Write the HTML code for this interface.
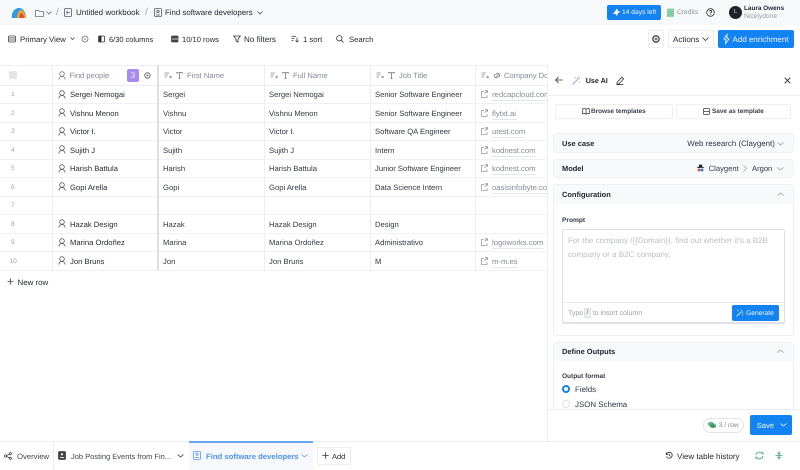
<!DOCTYPE html>
<html><head><meta charset="utf-8">
<style>
html,body{margin:0;padding:0;width:800px;height:470px;overflow:hidden;background:#fff}
body{font-family:"Liberation Sans",sans-serif;font-size:7.65px;color:#3f4450;position:relative;text-rendering:geometricPrecision;filter:blur(.25px)}
.t{position:absolute;white-space:nowrap;line-height:12px;height:12px;margin-top:.7px}
.b{position:absolute;box-sizing:border-box}
.d{color:#262a34}
.g{color:#858a95}
.h{color:#858a95;font-size:7.6px}
.m{color:#343844}
.u{color:#858a95;font-size:7.7px;border-bottom:1px solid #e4e6ea;height:11px}
.n{color:#a0a4ad;font-size:6.6px}
.s{color:#22252e;font-weight:bold;font-size:7.45px}
svg{position:absolute;overflow:visible;fill:none;stroke:#4a4f5a;stroke-width:.8}
</style></head><body>

<!-- top bar -->
<div class="b" style="left:0;top:0;width:800px;height:25px;background:#f7f8fa"></div>
<svg style="left:11px;top:7px" width="16" height="12" viewBox="0 0 16 12"><path d="M1 11C0 5 4 1 8 1c4 0 7 4 7 10z" fill="#2c9be8" stroke="none"/><path d="M6 11c0-5 2-8 4-8s4 3 5 8z" fill="#f2a32b" stroke="none"/><path d="M8.500 11c0-3 1-5 2-5s2 2 2.500 5z" fill="#e4483b" stroke="none"/></svg>
<svg style="left:35px;top:9px" width="9" height="8" viewBox="0 0 9 8"><path d="M.5 1.500h3l1 1h4v5h-8z" stroke="#6b707b"/></svg>
<svg style="left:46px;top:11px" width="6" height="4" viewBox="0 0 6 4"><path d="M.5.500l2.500 2.500L5.500.500" stroke="#6b707b"/></svg>
<div class="t g" style="left:56px;top:6px;font-size:10px;color:#a0a4ad">/</div>
<svg style="left:64px;top:8px" width="8" height="9" viewBox="0 0 8 9"><rect x=".5" y=".5" width="7" height="8" rx="1" stroke="#555a66"/><path d="M3 2.500v4M3 4.500h3" stroke="#555a66"/></svg>
<div class="t d" style="left:76px;top:6px;font-size:8px">Untitled workbook</div>
<div class="t g" style="left:145px;top:6px;font-size:10px;color:#a0a4ad">/</div>
<svg style="left:154px;top:8px" width="8" height="9" viewBox="0 0 8 9"><rect x=".5" y=".5" width="7" height="8" rx="1" stroke="#555a66"/><circle cx="4" cy="3.500" r="1.200" stroke="#555a66"/><path d="M2 7h4" stroke="#555a66"/></svg>
<div class="t d" style="left:165px;top:6px;font-size:7.85px">Find software developers</div>
<svg style="left:257px;top:11px" width="6" height="4" viewBox="0 0 6 4"><path d="M.5.500l2.500 2.500L5.500.500"/></svg>

<div class="b" style="left:607px;top:5px;width:54px;height:15px;background:#1383f2;border-radius:2px"></div>
<svg style="left:612px;top:8px" width="9" height="9" viewBox="0 0 9 9"><path d="M5 .5l1 2.500 2.500 1-2.500 1-1 3-1.500-2L1 6l1.500-2z" fill="#fff" stroke="none"/></svg>
<div class="t" style="left:622px;top:6px;color:#eef6ff;font-size:6.7px">14 days left</div>
<svg style="left:667px;top:8px" width="7" height="9" viewBox="0 0 7 9"><path d="M.5 1h6v7.500h-6z" fill="#86c9a4" stroke="#86c9a4"/></svg>
<div class="t g" style="left:677px;top:6px;color:#8f949e;font-size:6.7px">Credits</div>
<svg style="left:706px;top:8px" width="9" height="9" viewBox="0 0 9 9"><circle cx="4.500" cy="4.500" r="3.800" stroke="#333"/><path d="M3.300 3.500c.2-1.400 2.400-1.300 2.400 0 0 1-1.200 1-1.200 2M4.500 6.500v.6" stroke="#333" stroke-width=".9"/></svg>
<div class="b" style="left:729px;top:6px;width:13px;height:13px;border-radius:50%;background:#1f2228;color:#ccc;font-size:6px;text-align:center;line-height:13px">L</div>
<div class="t" style="left:744px;top:2.500px;color:#262a34;font-weight:bold;font-size:6.4px">Laura Owens</div>
<div class="t" style="left:744px;top:10.500px;color:#9a9ea7;font-size:6.7px">Nicelydone</div>

<!-- toolbar -->
<svg style="left:8px;top:35px" width="8" height="8" viewBox="0 0 8 8"><rect x=".5" y="1" width="7" height="6" rx=".8" stroke="#444"/><path d="M1 3h6M1 5h6" stroke="#444"/></svg>
<div class="t d" style="left:20px;top:33px;font-size:7.8px">Primary View</div>
<svg style="left:70px;top:37px" width="5" height="4" viewBox="0 0 5 4"><path d="M.5.500l2 2 2-2"/></svg>
<svg style="left:81px;top:35px" width="8" height="8" viewBox="0 0 8 8"><circle cx="4" cy="4" r="3" stroke="#666"/><circle cx="4" cy="4" r=".8" fill="#666" stroke="none"/></svg>
<svg style="left:98px;top:35px" width="8" height="8" viewBox="0 0 8 8"><rect x=".5" y="1" width="6" height="6" rx=".8" stroke="#333"/><rect x="1" y="1" width="2.500" height="6" fill="#333" stroke="none"/></svg>
<div class="t d" style="left:109px;top:33px;font-size:7.45px">6/30 columns</div>
<svg style="left:171px;top:35px" width="8" height="8" viewBox="0 0 8 8"><rect x=".5" y="1" width="6.500" height="6" rx=".8" fill="#444" stroke="#444"/><path d="M1 4h6" stroke="#fff" stroke-width=".7"/></svg>
<div class="t d" style="left:182px;top:33px;font-size:7.55px">10/10 rows</div>
<svg style="left:233px;top:35px" width="8" height="8" viewBox="0 0 8 8"><path d="M.7 1h6.600L5 4v3.200L3 6V4z" stroke="#333"/></svg>
<div class="t d" style="left:244px;top:33px;font-size:8.1px">No filters</div>
<svg style="left:291px;top:35px" width="8" height="8" viewBox="0 0 8 8"><path d="M.5 1.500h4.500M.5 3.500h3M.5 5.500h2M6 2.500v4.500M4.500 5.500L6 7l1.500-1.500" stroke="#444"/></svg>
<div class="t d" style="left:303px;top:33px;font-size:7.7px">1 sort</div>
<svg style="left:336px;top:35px" width="8" height="8" viewBox="0 0 8 8"><circle cx="3.300" cy="3.300" r="2.700" stroke="#333"/><path d="M5.300 5.300L7.500 7.500" stroke="#333"/></svg>
<div class="t d" style="left:349px;top:33px;font-size:7.7px">Search</div>

<div class="b" style="left:648px;top:30px;width:16px;height:18px;border:1px solid #eceef1;border-radius:2px"></div>
<svg style="left:652px;top:35px" width="8" height="8" viewBox="0 0 8 8"><circle cx="4" cy="4" r="3.200" stroke="#444" stroke-width="1.300"/><circle cx="4" cy="4" r="1" stroke="#444"/></svg>
<div class="b" style="left:668px;top:30px;width:46px;height:18px;border:1px solid #eceef1;border-radius:2px"></div>
<div class="t d" style="left:673px;top:33px;font-size:8px">Actions</div>
<svg style="left:702px;top:37px" width="7" height="4" viewBox="0 0 7 4"><path d="M.5.500l3 3 3-3" stroke="#333"/></svg>
<div class="b" style="left:718px;top:30px;width:76px;height:18px;background:#1383f2;border-radius:2px"></div>
<svg style="left:723px;top:34px" width="7" height="10" viewBox="0 0 7 10"><path d="M4 .5L1 5l2 .5-.5 4L6 5 4 4.500z" stroke="#fff"/></svg>
<div class="t" style="left:732.500px;top:33px;color:#eef6ff;font-size:8px">Add enrichment</div>

<!-- grid -->
<div class="b" style="left:0;top:65px;width:547px;height:1px;background:#eceef1"></div>
<div class="b" style="left:0;top:85px;width:547px;height:1px;background:#eceef1"></div>
<div class="b" style="left:0;top:103px;width:547px;height:1px;background:#f0f1f4"></div>
<div class="b" style="left:0;top:122px;width:547px;height:1px;background:#f0f1f4"></div>
<div class="b" style="left:0;top:140px;width:547px;height:1px;background:#f0f1f4"></div>
<div class="b" style="left:0;top:159px;width:547px;height:1px;background:#f0f1f4"></div>
<div class="b" style="left:0;top:177px;width:547px;height:1px;background:#f0f1f4"></div>
<div class="b" style="left:0;top:196px;width:547px;height:1px;background:#f0f1f4"></div>
<div class="b" style="left:0;top:214px;width:547px;height:1px;background:#f0f1f4"></div>
<div class="b" style="left:0;top:233px;width:547px;height:1px;background:#f0f1f4"></div>
<div class="b" style="left:0;top:251px;width:547px;height:1px;background:#f0f1f4"></div>
<div class="b" style="left:0;top:270px;width:547px;height:1px;background:#f0f1f4"></div>
<div class="b" style="left:52px;top:65px;width:1px;height:205px;background:#eceef1"></div>
<div class="b" style="left:157px;top:65px;width:2px;height:205px;background:#dcdee6"></div>
<div class="b" style="left:264px;top:65px;width:1px;height:205px;background:#eceef1"></div>
<div class="b" style="left:370px;top:65px;width:1px;height:205px;background:#eceef1"></div>
<div class="b" style="left:475px;top:65px;width:1px;height:205px;background:#eceef1"></div>

<!-- header -->
<div class="b" style="left:9px;top:71px;width:8px;height:8px;border-radius:1.500px;background:#e3e5ea"></div>
<svg style="left:58px;top:71px" width="8" height="9" viewBox="0 0 8 9"><circle cx="4" cy="3" r="2.300" stroke="#777"/><path d="M.8 8.500c.4-2 1.500-3 3.200-3s2.800 1 3.200 3" stroke="#777"/></svg>
<div class="t h" style="left:69.500px;top:69px">Find people</div>
<div class="b" style="left:127px;top:69px;width:12px;height:13px;background:#a78bef;border-radius:2px;color:#efe9ff;font-size:8.5px;line-height:13px;text-align:center">3</div>
<svg style="left:144px;top:72px" width="7" height="7" viewBox="0 0 7 7"><circle cx="3.500" cy="3.500" r="2.700" stroke="#555"/><circle cx="3.500" cy="3.500" r=".9" fill="#555" stroke="none"/></svg>

<svg style="left:164px;top:72px" width="8" height="7" viewBox="0 0 8 7"><path d="M.5 1h4.500M.5 3h3.500M.5 5h2.500M5 5h2.500M6.300 3.800L7.500 5 6.300 6.200" stroke="#8a8f9a"/></svg>
<svg style="left:176px;top:72px" width="7" height="7" viewBox="0 0 7 7"><path d="M.5 1.500V.7h6v.8M3.500.7v5.800M2.500 6.500h2" stroke="#777"/></svg>
<div class="t h" style="left:187px;top:69px">First Name</div>
<svg style="left:270px;top:72px" width="8" height="7" viewBox="0 0 8 7"><path d="M.5 1h4.500M.5 3h3.500M.5 5h2.500M5 5h2.500M6.300 3.800L7.500 5 6.300 6.200" stroke="#8a8f9a"/></svg>
<svg style="left:282px;top:72px" width="7" height="7" viewBox="0 0 7 7"><path d="M.5 1.500V.7h6v.8M3.500.7v5.800M2.500 6.500h2" stroke="#777"/></svg>
<div class="t h" style="left:293px;top:69px">Full Name</div>
<svg style="left:376px;top:72px" width="8" height="7" viewBox="0 0 8 7"><path d="M.5 1h4.500M.5 3h3.500M.5 5h2.500M5 5h2.500M6.300 3.800L7.500 5 6.300 6.200" stroke="#8a8f9a"/></svg>
<svg style="left:388px;top:72px" width="7" height="7" viewBox="0 0 7 7"><path d="M.5 1.500V.7h6v.8M3.500.7v5.800M2.500 6.500h2" stroke="#777"/></svg>
<div class="t h" style="left:399px;top:69px">Job Title</div>
<svg style="left:481px;top:72px" width="8" height="7" viewBox="0 0 8 7"><path d="M.5 1h4.500M.5 3h3.500M.5 5h2.500M5 5h2.500M6.300 3.800L7.500 5 6.300 6.200" stroke="#8a8f9a"/></svg>
<svg style="left:493px;top:72px" width="8" height="7" viewBox="0 0 8 7"><path d="M3.500 4.500l2-2M3 2.500l1-1c1-1 3.500 1 2.500 2.500l-1 1M5 4.500l-1 1c-1 1-3.500-1-2.500-2.500l1-1" stroke="#777"/></svg>
<div class="t h" style="left:504px;top:69px">Company Do</div>

<!-- row numbers -->
<div class="t n" style="left:11px;top:88.500px">1</div>
<div class="t n" style="left:11px;top:107px">2</div>
<div class="t n" style="left:11px;top:125.500px">3</div>
<div class="t n" style="left:11px;top:144px">4</div>
<div class="t n" style="left:11px;top:162.500px">5</div>
<div class="t n" style="left:11px;top:181px">6</div>
<div class="t n" style="left:11px;top:199.500px">7</div>
<div class="t n" style="left:11px;top:218px">8</div>
<div class="t n" style="left:11px;top:236.500px">9</div>
<div class="t n" style="left:9.500px;top:255px">10</div>

<!-- person icons -->
<svg style="left:58px;top:90px" width="8" height="9" viewBox="0 0 8 9"><circle cx="4" cy="3" r="2.300" stroke="#555"/><path d="M.8 8.500c.4-2 1.500-3 3.200-3s2.800 1 3.200 3" stroke="#555"/></svg>
<svg style="left:58px;top:108px" width="8" height="9" viewBox="0 0 8 9"><circle cx="4" cy="3" r="2.300" stroke="#555"/><path d="M.8 8.500c.4-2 1.500-3 3.200-3s2.800 1 3.200 3" stroke="#555"/></svg>
<svg style="left:58px;top:127px" width="8" height="9" viewBox="0 0 8 9"><circle cx="4" cy="3" r="2.300" stroke="#555"/><path d="M.8 8.500c.4-2 1.500-3 3.200-3s2.800 1 3.200 3" stroke="#555"/></svg>
<svg style="left:58px;top:145px" width="8" height="9" viewBox="0 0 8 9"><circle cx="4" cy="3" r="2.300" stroke="#555"/><path d="M.8 8.500c.4-2 1.500-3 3.200-3s2.800 1 3.200 3" stroke="#555"/></svg>
<svg style="left:58px;top:164px" width="8" height="9" viewBox="0 0 8 9"><circle cx="4" cy="3" r="2.300" stroke="#555"/><path d="M.8 8.500c.4-2 1.500-3 3.200-3s2.800 1 3.200 3" stroke="#555"/></svg>
<svg style="left:58px;top:182px" width="8" height="9" viewBox="0 0 8 9"><circle cx="4" cy="3" r="2.300" stroke="#555"/><path d="M.8 8.500c.4-2 1.500-3 3.200-3s2.800 1 3.200 3" stroke="#555"/></svg>
<svg style="left:58px;top:219px" width="8" height="9" viewBox="0 0 8 9"><circle cx="4" cy="3" r="2.300" stroke="#555"/><path d="M.8 8.500c.4-2 1.500-3 3.200-3s2.800 1 3.200 3" stroke="#555"/></svg>
<svg style="left:58px;top:238px" width="8" height="9" viewBox="0 0 8 9"><circle cx="4" cy="3" r="2.300" stroke="#555"/><path d="M.8 8.500c.4-2 1.500-3 3.200-3s2.800 1 3.200 3" stroke="#555"/></svg>
<svg style="left:58px;top:256px" width="8" height="9" viewBox="0 0 8 9"><circle cx="4" cy="3" r="2.300" stroke="#555"/><path d="M.8 8.500c.4-2 1.500-3 3.200-3s2.800 1 3.200 3" stroke="#555"/></svg>

<!-- names -->
<div class="t d" style="left:70px;top:88.500px">Sergei Nemogai</div>
<div class="t d" style="left:70px;top:107px">Vishnu Menon</div>
<div class="t d" style="left:70px;top:125.500px">Victor I.</div>
<div class="t d" style="left:70px;top:144px">Sujith J</div>
<div class="t d" style="left:70px;top:162.500px">Harish Battula</div>
<div class="t d" style="left:70px;top:181px">Gopi Arella</div>
<div class="t d" style="left:70px;top:218px">Hazak Design</div>
<div class="t d" style="left:70px;top:236.500px">Marina Ordoñez</div>
<div class="t d" style="left:70px;top:255px">Jon Bruns</div>

<div class="t m" style="left:163px;top:88.500px">Sergei</div>
<div class="t m" style="left:163px;top:107px">Vishnu</div>
<div class="t m" style="left:163px;top:125.500px">Victor</div>
<div class="t m" style="left:163px;top:144px">Sujith</div>
<div class="t m" style="left:163px;top:162.500px">Harish</div>
<div class="t m" style="left:163px;top:181px">Gopi</div>
<div class="t m" style="left:163px;top:218px">Hazak</div>
<div class="t m" style="left:163px;top:236.500px">Marina</div>
<div class="t m" style="left:163px;top:255px">Jon</div>

<div class="t m" style="left:269px;top:88.500px">Sergei Nemogai</div>
<div class="t m" style="left:269px;top:107px">Vishnu Menon</div>
<div class="t m" style="left:269px;top:125.500px">Victor I.</div>
<div class="t m" style="left:269px;top:144px">Sujith J</div>
<div class="t m" style="left:269px;top:162.500px">Harish Battula</div>
<div class="t m" style="left:269px;top:181px">Gopi Arella</div>
<div class="t m" style="left:269px;top:218px">Hazak Design</div>
<div class="t m" style="left:269px;top:236.500px">Marina Ordoñez</div>
<div class="t m" style="left:269px;top:255px">Jon Bruns</div>

<div class="t m" style="left:375px;top:88.500px">Senior Software Engineer</div>
<div class="t m" style="left:375px;top:107px">Senior Software Engineer</div>
<div class="t m" style="left:375px;top:125.500px">Software QA Engineer</div>
<div class="t m" style="left:375px;top:144px">Intern</div>
<div class="t m" style="left:375px;top:162.500px">Junior Software Engineer</div>
<div class="t m" style="left:375px;top:181px">Data Science Intern</div>
<div class="t m" style="left:375px;top:218px">Design</div>
<div class="t m" style="left:375px;top:236.500px">Administrativo</div>
<div class="t m" style="left:375px;top:255px">M</div>

<!-- link icons -->
<svg style="left:481px;top:90px" width="7" height="8" viewBox="0 0 7 8"><path d="M3 1.500H.5v6h5.500V5M4 .7h2.500v2.300M6.500.7L3.500 3.700" stroke="#999"/></svg>
<svg style="left:481px;top:109px" width="7" height="8" viewBox="0 0 7 8"><path d="M3 1.500H.5v6h5.500V5M4 .7h2.500v2.300M6.500.7L3.500 3.700" stroke="#999"/></svg>
<svg style="left:481px;top:127px" width="7" height="8" viewBox="0 0 7 8"><path d="M3 1.500H.5v6h5.500V5M4 .7h2.500v2.300M6.500.7L3.500 3.700" stroke="#999"/></svg>
<svg style="left:481px;top:146px" width="7" height="8" viewBox="0 0 7 8"><path d="M3 1.500H.5v6h5.500V5M4 .7h2.500v2.300M6.500.7L3.500 3.700" stroke="#999"/></svg>
<svg style="left:481px;top:164px" width="7" height="8" viewBox="0 0 7 8"><path d="M3 1.500H.5v6h5.500V5M4 .7h2.500v2.300M6.500.7L3.500 3.700" stroke="#999"/></svg>
<svg style="left:481px;top:183px" width="7" height="8" viewBox="0 0 7 8"><path d="M3 1.500H.5v6h5.500V5M4 .7h2.500v2.300M6.500.7L3.500 3.700" stroke="#999"/></svg>
<svg style="left:481px;top:238px" width="7" height="8" viewBox="0 0 7 8"><path d="M3 1.500H.5v6h5.500V5M4 .7h2.500v2.300M6.500.7L3.500 3.700" stroke="#999"/></svg>
<svg style="left:481px;top:257px" width="7" height="8" viewBox="0 0 7 8"><path d="M3 1.500H.5v6h5.500V5M4 .7h2.500v2.300M6.500.7L3.500 3.700" stroke="#999"/></svg>

<div class="t u" style="left:492px;top:88.500px">redcapcloud.com</div>
<div class="t u" style="left:492px;top:107px">flytxt.ai</div>
<div class="t u" style="left:492px;top:125.500px">utest.com</div>
<div class="t u" style="left:492px;top:144px">kodnest.com</div>
<div class="t u" style="left:492px;top:162.500px">kodnest.com</div>
<div class="t u" style="left:492px;top:181px">oasisinfobyte.com</div>
<div class="t u" style="left:492px;top:236.500px">logoworks.com</div>
<div class="t u" style="left:492px;top:255px">m-m.es</div>

<svg style="left:7px;top:278px" width="7" height="7" viewBox="0 0 7 7"><path d="M3.500.5v6M.5 3.500h6" stroke="#444"/></svg>
<div class="t d" style="left:17.500px;top:276px;font-size:7.9px">New row</div>

<!-- right panel -->
<div class="b" style="left:547px;top:65px;width:253px;height:376px;background:#fff;border-left:1px solid #eceef1"></div>
<div class="b" style="left:547px;top:95px;width:253px;height:1px;background:#eceef1"></div>
<svg style="left:555px;top:76px" width="8" height="8" viewBox="0 0 8 8"><path d="M7.500 4H.7M3.500 1.200L.7 4l2.800 2.800" stroke="#333"/></svg>
<svg style="left:572px;top:76px" width="9" height="9" viewBox="0 0 9 9"><path d="M.7 8.300L6 3M6 .7v1.500M7.800 2.500H6.500M3 .9v1.300M7 5.500v1.300" stroke="#a077ea"/></svg>
<div class="t" style="left:585.700px;top:74px;color:#22252e;font-weight:bold;font-size:7.2px">Use AI</div>
<svg style="left:616px;top:76px" width="9" height="9" viewBox="0 0 9 9"><path d="M1 6.500L5.800 1.200l1.800 1.600L3 8H1zM.5 8.600h7" stroke="#333"/></svg>
<svg style="left:784px;top:77px" width="7" height="7" viewBox="0 0 7 7"><path d="M.7.700l5.600 5.600M6.300.700L.7 6.300" stroke="#333" stroke-width="1"/></svg>

<div class="b" style="left:555px;top:104px;width:118px;height:15px;border:1px solid #eceef1;border-radius:2px"></div>
<svg style="left:582px;top:108px" width="8" height="7" viewBox="0 0 8 7"><path d="M4 1.200C3 .5 1.500.5.700.8v5c.800-.3 2.300-.3 3.300.4 1-.7 2.500-.7 3.300-.4v-5C6.500.5 5 .5 4 1.200zM4 1.200v5" stroke="#444"/></svg>
<div class="t" style="left:591px;top:105px;color:#3a3f4a;font-size:6.4px;font-weight:bold">Browse templates</div>
<div class="b" style="left:676px;top:104px;width:115px;height:15px;border:1px solid #eceef1;border-radius:2px"></div>
<svg style="left:703px;top:108px" width="7" height="7" viewBox="0 0 7 7"><rect x=".5" y=".5" width="6" height="6" rx="1" stroke="#444"/><path d="M1 3.500h5" stroke="#444"/></svg>
<div class="t" style="left:712px;top:105px;color:#3a3f4a;font-size:6.4px;font-weight:bold">Save as template</div>

<div class="b" style="left:553px;top:133px;width:241px;height:20px;background:#f8f9fb;border:1px solid #eff0f3;border-radius:4px"></div>
<div class="t s" style="left:562px;top:137px">Use case</div>
<div class="t m" style="left:687.300px;top:137px;font-size:7.9px">Web research (Claygent)</div>
<svg style="left:777px;top:142px" width="7" height="4" viewBox="0 0 7 4"><path d="M.5.500l3 2.500 3-2.500" stroke="#999"/></svg>

<div class="b" style="left:553px;top:159px;width:241px;height:19px;background:#f8f9fb;border:1px solid #eff0f3;border-radius:4px"></div>
<div class="t s" style="left:562px;top:162px">Model</div>
<svg style="left:696px;top:164px" width="9" height="9" viewBox="0 0 9 9"><path d="M1 3.500h7M2.800 3.500L3.500 1h2l.7 2.500" stroke="#222" fill="#222"/><circle cx="3" cy="6" r="1.500" fill="#e8543f" stroke="none"/><circle cx="6" cy="6" r="1.500" fill="#2f7fe0" stroke="none"/></svg>
<div class="t m" style="left:708.700px;top:162px;font-size:7.6px">Claygent</div>
<svg style="left:743px;top:165px" width="4" height="7" viewBox="0 0 4 7"><path d="M.5.500l3 3-3 3" stroke="#aaa"/></svg>
<div class="t m" style="left:752px;top:162px;font-size:7.6px">Argon</div>
<svg style="left:777px;top:167px" width="7" height="4" viewBox="0 0 7 4"><path d="M.5.500l3 2.500 3-2.500" stroke="#999"/></svg>

<div class="b" style="left:553px;top:184px;width:241px;height:152px;background:#fff;border:1px solid #eff0f3;border-radius:4px"></div>
<div class="b" style="left:554px;top:185px;width:239px;height:19px;background:#f8f9fb;border-radius:4px 4px 0 0"></div>
<div class="t s" style="left:562px;top:188px">Configuration</div>
<svg style="left:777px;top:192px" width="7" height="4" viewBox="0 0 7 4"><path d="M.5 3.500l3-2.500 3 2.500" stroke="#999"/></svg>
<div class="t" style="left:562px;top:214px;color:#333844;font-weight:bold;font-size:6.6px">Prompt</div>

<div class="b" style="left:562px;top:229px;width:223px;height:95px;border:1px solid #dfe1e6;border-bottom-width:2px;border-radius:2px"></div>
<div class="t" style="left:568px;top:234px;color:#bcc0c6;font-size:8px">For the company /{{Domain}}, find out whether it's a B2B</div>
<div class="t" style="left:568px;top:248px;color:#bcc0c6;font-size:8px">company or a B2C company.</div>
<div class="b" style="left:563px;top:302px;width:221px;height:1px;background:#e6e8ec"></div>
<div class="t" style="left:568px;top:307px;color:#9a9ea7;font-size:7px">Type</div>
<div class="b" style="left:584px;top:308px;width:7px;height:10px;background:#eef0f2;border:1px solid #e0e2e6;border-radius:1px;color:#777;font-size:7px;line-height:8px;text-align:center">/</div>
<div class="t" style="left:592.700px;top:307px;color:#9a9ea7;font-size:7px">to insert column</div>
<div class="b" style="left:732px;top:305px;width:47px;height:16px;background:#1383f2;border-radius:2px"></div>
<svg style="left:736px;top:309px" width="8" height="8" viewBox="0 0 8 8"><path d="M.7 7.300L5.500 2.500M1.500 1l1 1M6 5l1 1M5 .7l.5 1M7.300 3l-1 .3" stroke="#fff"/></svg>
<div class="t" style="left:746px;top:307px;color:#eef6ff;font-size:6.7px">Generate</div>

<div class="b" style="left:553px;top:342px;width:241px;height:70px;background:#fff;border:1px solid #eff0f3;border-radius:4px"></div>
<div class="b" style="left:554px;top:343px;width:239px;height:18px;background:#f8f9fb;border-radius:4px 4px 0 0"></div>
<div class="t s" style="left:562px;top:345px">Define Outputs</div>
<svg style="left:777px;top:349px" width="7" height="4" viewBox="0 0 7 4"><path d="M.5 3.500l3-2.500 3 2.500" stroke="#999"/></svg>
<div class="t" style="left:562px;top:370px;color:#333844;font-weight:bold;font-size:6.5px">Output format</div>
<div class="b" style="left:562px;top:385px;width:8px;height:8px;border-radius:50%;border:2.500px solid #1383f2;background:#fff"></div>
<div class="t m" style="left:575px;top:383px;font-size:7.9px">Fields</div>
<div class="b" style="left:562px;top:400px;width:8px;height:8px;border-radius:50%;border:1px solid #dfe1e6;background:#fff"></div>
<div class="t m" style="left:575px;top:398px;font-size:7.9px">JSON Schema</div>

<div class="b" style="left:548px;top:409px;width:252px;height:31px;background:#fff;border-top:1px solid #eceef1"></div>
<div class="b" style="left:703px;top:418px;width:41px;height:15px;border:1px solid #e2e4e8;border-radius:8px"></div>
<svg style="left:707px;top:421px" width="10" height="8" viewBox="0 0 10 8"><ellipse cx="4" cy="3" rx="3.300" ry="2" fill="#5bb583" stroke="none"/><ellipse cx="6" cy="5" rx="3.300" ry="2" fill="#3f9d6a" stroke="none"/></svg>
<div class="t g" style="left:718.700px;top:419px;font-size:6.7px">3 / row</div>
<div class="b" style="left:750px;top:415px;width:42px;height:20px;background:#1383f2;border-radius:2px"></div>
<div class="t" style="left:756.700px;top:419px;color:#eef6ff;font-size:7.6px">Save</div>
<svg style="left:780px;top:423px" width="7" height="4" viewBox="0 0 7 4"><path d="M.5.500l3 2.500 3-2.500" stroke="#fff"/></svg>

<!-- bottom bar -->
<div class="b" style="left:0;top:441px;width:800px;height:1px;background:#eceef1"></div>
<svg style="left:4px;top:452px" width="8" height="8" viewBox="0 0 8 8"><circle cx="1.500" cy="4" r="1.100" stroke="#444"/><circle cx="6.300" cy="1.700" r="1.100" stroke="#444"/><circle cx="6.300" cy="6.300" r="1.100" stroke="#444"/><path d="M2.500 3.500l2.800-1.300M2.500 4.500l2.800 1.300" stroke="#444"/></svg>
<div class="t" style="left:17px;top:450px;color:#3f4450;font-size:7.7px">Overview</div>
<div class="b" style="left:53px;top:442px;width:1px;height:28px;background:#eceef1"></div>
<svg style="left:58px;top:451px" width="8" height="9" viewBox="0 0 8 9"><rect x=".5" y=".5" width="7" height="8" rx="1" fill="#444" stroke="#444"/><circle cx="4" cy="3.300" r="1.100" fill="#fff" stroke="none"/><path d="M2 6.500h4" stroke="#fff"/></svg>
<div class="t" style="left:71px;top:450px;color:#3f4450;font-size:7.5px">Job Posting Events from Fin...</div>
<svg style="left:177px;top:454px" width="7" height="4" viewBox="0 0 7 4"><path d="M.5.500l3 2.500 3-2.500" stroke="#333"/></svg>
<div class="b" style="left:189px;top:441px;width:124px;height:29px;background:#f6f8fb;border-top:2px solid #69a6f5"></div>
<svg style="left:193px;top:451px" width="8" height="9" viewBox="0 0 8 9"><rect x=".5" y=".5" width="7" height="8" rx="1" stroke="#5a9cf2"/><circle cx="4" cy="3.300" r="1.100" stroke="#5a9cf2"/><path d="M2 6.500h4" stroke="#5a9cf2"/></svg>
<div class="t" style="left:206px;top:450px;color:#4d93f0;font-weight:bold;font-size:7.7px">Find software developers</div>
<svg style="left:301px;top:454px" width="7" height="4" viewBox="0 0 7 4"><path d="M.5.500l3 2.500 3-2.500" stroke="#5a9cf2"/></svg>
<div class="b" style="left:317px;top:447px;width:34px;height:18px;border:1px solid #eceef1;border-radius:2px"></div>
<svg style="left:322px;top:452px" width="7" height="7" viewBox="0 0 7 7"><path d="M3.500.3v6.400M.3 3.500h6.400" stroke="#333"/></svg>
<div class="t d" style="left:332px;top:450px;font-size:7.5px">Add</div>

<svg style="left:665px;top:451px" width="8" height="8" viewBox="0 0 8 8"><path d="M1.200 1.500v2h2M1.300 3.500A3 3 0 1 1 1.500 5.500M4.200 2.500v2l1.300.8" stroke="#333"/></svg>
<div class="t d" style="left:677px;top:450px;font-size:8px">View table history</div>
<svg style="left:755px;top:451px" width="9" height="9" viewBox="0 0 9 9"><path d="M1 4a3.500 3.500 0 0 1 6-1.800L8 3V.8M8 5a3.500 3.500 0 0 1-6 1.800L1 6v2.200" stroke="#3aa76d"/></svg>
<svg style="left:775px;top:451px" width="8" height="9" viewBox="0 0 8 9"><path d="M.5 4.500h7M4 .3v8.400M2.500 1.800L4 3.300l1.500-1.500M2.500 7.200L4 5.700l1.500 1.500" stroke="#3aa76d"/></svg>

</body></html>
